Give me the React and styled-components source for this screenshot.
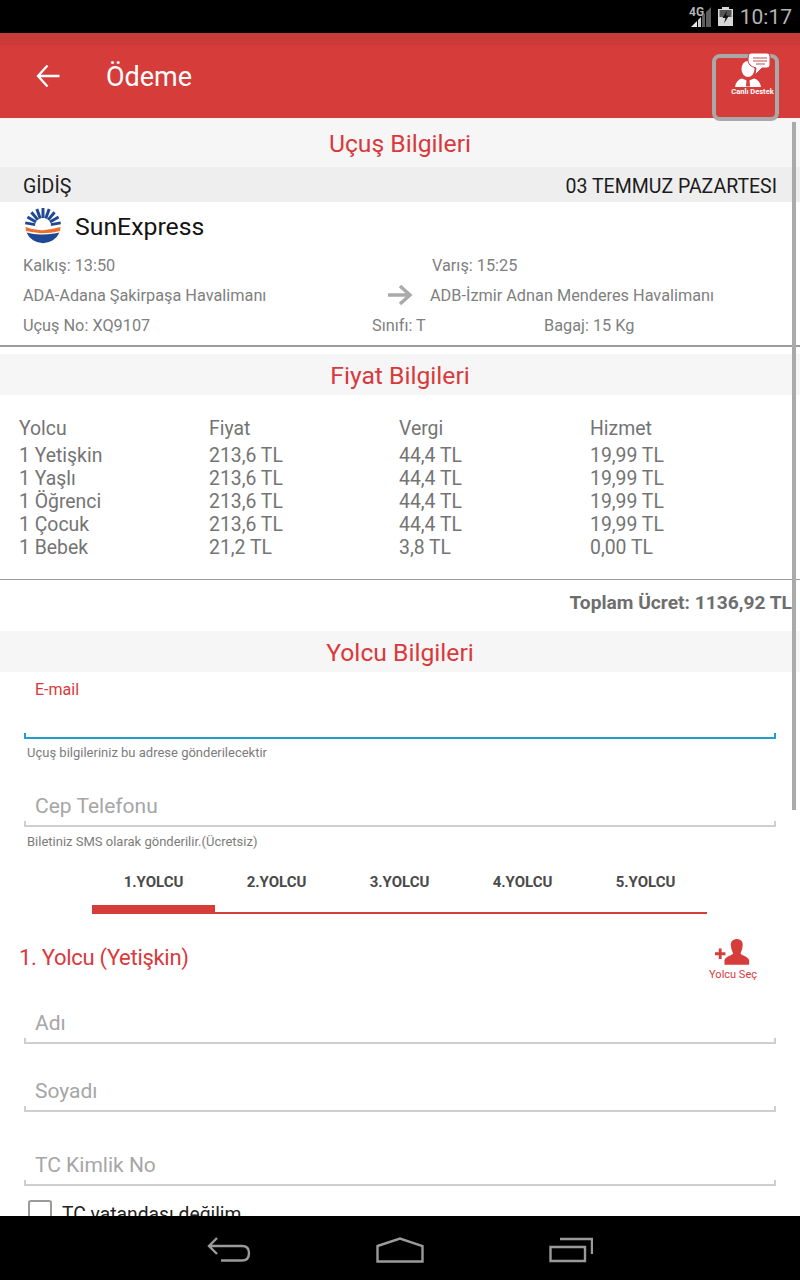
import styled, { createGlobalStyle } from 'styled-components'

const Global = createGlobalStyle`
  html, body { margin: 0; padding: 0; background: #fff; }
  * { box-sizing: border-box; }
  body { font-family: Roboto, "Liberation Sans", sans-serif; }
`

const Screen = styled.div`
  position: relative;
  width: 800px;
  height: 1280px;
  overflow: hidden;
  display: flex;
  flex-direction: column;
  background: #fff;
`
const StatusBar = styled.div`
  height: 33px;
  flex: none;
  background: #000;
  display: flex;
  align-items: center;
  justify-content: flex-end;
  padding-right: 8px;
  color: #b4b4b4;
  font-size: 21px;
  gap: 7px;
`
const StatusIcons = styled.div`
  display: flex;
  align-items: center;
  gap: 6px;
`
const AppBar = styled.div`
  position: relative;
  height: 85px;
  flex: none;
  background: linear-gradient(#c93b39 0, #c93b39 12px, #d63c3a 12px);
  display: flex;
  align-items: center;
  padding: 0 0 0 35px;
  color: #fff;
`
const AppTitle = styled.div`
  font-size: 27px;
  margin-left: 45px;
  margin-top: 2px;
`
const Support = styled.div`
  position: absolute;
  left: 712px;
  top: 21px;
  width: 67px;
  height: 67px;
  border: 4px solid #a9a9a9;
  border-radius: 8px;
  display: flex;
  flex-direction: column;
  align-items: center;
`
const SupportIcon = styled.svg`
  position: absolute;
  left: 8px;
  top: -7px;
`
const SupportLabel = styled.div`
  position: absolute;
  top: 29px;
  left: 7px;
  right: -7px;
  text-align: center;
  font-size: 7.5px;
  font-weight: 700;
  color: #fff;
  white-space: nowrap;
`
const Content = styled.div`
  flex: 1;
  overflow: hidden;
`
const SectionHead = styled.div`
  height: ${p => p.$h}px;
  background: #f6f6f6;
  color: #d9393c;
  font-size: 24.7px;
  display: flex;
  align-items: center;
  justify-content: center;
  padding-top: 1px;
  margin-top: ${p => p.$mt || 0}px;
`
const DirectionRow = styled.div`
  height: 35px;
  background: #eee;
  display: flex;
  justify-content: space-between;
  align-items: center;
  padding: 3px 23px 0;
  font-size: 19.5px;
  color: #1c1c1c;
`
const Airline = styled.div`
  height: 48px;
  display: flex;
  align-items: center;
  padding: 0 0 0 25px;
  gap: 14px;
  font-size: 24.8px;
  color: #141414;
`
const FlightGrid = styled.div`
  height: 97px;
  display: flex;
  flex-direction: column;
  padding-left: 23px;
  font-size: 16.3px;
  color: #808080;
  border-bottom: 2px solid #9c9c9c;
`
const FlightRow = styled.div`
  height: 30px;
  display: flex;
  align-items: center;
  flex: none;
`
const FlightCell = styled.div`
  width: ${p => p.$w}px;
  flex: none;
  white-space: nowrap;
`
const ArrowCell = styled.div`
  width: 43px;
  flex: none;
  display: flex;
  align-items: center;
`
const PriceTable = styled.div`
  height: 185px;
  padding: 22px 0 0 19px;
  border-bottom: 1px solid #9c9c9c;
  font-size: 19.4px;
  color: #747474;
`
const PriceRow = styled.div`
  display: grid;
  grid-template-columns: 190px 190px 191px 190px;
  height: 23px;
  line-height: 23px;
  margin-bottom: ${p => (p.$head ? 4 : 0)}px;
`
const Total = styled.div`
  height: 51px;
  padding: 0 8px 7px 0;
  display: flex;
  align-items: center;
  justify-content: flex-end;
  font-size: 19.2px;
  font-weight: 700;
  color: #6e6e6e;
`
const EmailLabel = styled.div`
  height: 35px;
  padding: 8px 0 0 35px;
  font-size: 16px;
  color: #d9393c;
`
const Field = styled.div`
  height: ${p => p.$h}px;
  margin: 0 24px 0 24px;
  padding-left: 11px;
  display: flex;
  align-items: flex-end;
  font-size: 21px;
  color: #a6a6a6;
  padding-bottom: 7px;
  border-bottom: 2px solid ${p => (p.$active ? '#1f9fd0' : '#cfcfcf')};
  position: relative;
  &::before, &::after {
    content: '';
    position: absolute;
    bottom: -2px;
    width: 2px;
    height: 6px;
    background: ${p => (p.$active ? '#1f9fd0' : '#cfcfcf')};
  }
  &::before { left: 0; }
  &::after { right: 0; }
`
const Helper = styled.div`
  height: ${p => p.$h}px;
  padding: ${p => p.$pt}px 0 0 27px;
  font-size: 13px;
  color: #7c7c7c;
`
const Tabs = styled.div`
  display: flex;
  width: 615px;
  margin: 10px 0 0 92px;
  border-bottom: 2px solid #d63c3a;
`
const Tab = styled.div`
  width: 123px;
  height: 46px;
  padding-top: 5px;
  margin-bottom: -2px;
  text-align: center;
  font-size: 15px;
  font-weight: 700;
  color: #4a4a4a;
  border-bottom: ${p => (p.$active ? '9px solid #d63c3a' : 'none')};
`
const PassengerHead = styled.div`
  height: 63px;
  display: flex;
  align-items: flex-start;
  justify-content: space-between;
  padding: 31px 43px 0 19px;
  color: #d9393c;
  font-size: 22px;
  letter-spacing: -0.3px;
`
const PickPassenger = styled.div`
  display: flex;
  flex-direction: column;
  align-items: center;
  font-size: 11px;
  letter-spacing: 0;
  margin-top: -6px;
  gap: 1px;
`
const CheckRow = styled.div`
  display: flex;
  align-items: flex-start;
  gap: 10px;
  padding: 14px 0 0 28px;
  font-size: 19.3px;
  color: #222;
`
const CheckLabel = styled.span`
  padding-top: 3px;
`
const CheckBox = styled.div`
  width: 24px;
  height: 24px;
  border: 2px solid #9a9a9a;
  border-radius: 3px;
  flex: none;
`
const NavBar = styled.div`
  height: 64px;
  flex: none;
  background: #000;
  position: relative;
  z-index: 1;
  display: flex;
  align-items: center;
  justify-content: center;
  gap: 125px;
  padding: 3px 0 0 0;
`
const ScrollThumb = styled.div`
  position: absolute;
  left: 792px;
  top: 122px;
  width: 4px;
  height: 688px;
  background: #aaa;
`

const SunLogo = () => {
  const rays = []
  for (let i = 0; i < 9; i++) {
    const a = (-90 - 80 + i * 20) * Math.PI / 180
    rays.push(
      <line key={i} x1={18 + 8 * Math.cos(a)} y1={18 + 8 * Math.sin(a)} x2={18 + 18 * Math.cos(a)} y2={18 + 18 * Math.sin(a)}
        stroke="#1f4a93" strokeWidth="3" />
    )
  }
  return (
    <svg width="36" height="36" viewBox="0 0 36 36">
      {rays}
      <path d="M0.5 19 Q10 23 20 22 Q28 21 35.5 19 L35 23 Q22 26 14 25 Q6 24 1 23 Z" fill="#ee6f2d" />
      <path d="M1.5 24.5 Q10 27 18 26.5 Q28 26 34.5 24.5 A18 18 0 0 1 1.5 24.5 Z" fill="#1f4a93" />
    </svg>
  )
}

const prices = [
  ['1 Yetişkin', '213,6 TL', '44,4 TL', '19,99 TL'],
  ['1 Yaşlı', '213,6 TL', '44,4 TL', '19,99 TL'],
  ['1 Öğrenci', '213,6 TL', '44,4 TL', '19,99 TL'],
  ['1 Çocuk', '213,6 TL', '44,4 TL', '19,99 TL'],
  ['1 Bebek', '21,2 TL', '3,8 TL', '0,00 TL'],
]

const App = () => {
  return (
    <Screen>
      <Global />
      <StatusBar>
        <StatusIcons>
          <svg width="23" height="22" viewBox="0 0 23 22">
            <text x="0" y="10" fontSize="12" fontWeight="700" fill="#b4b4b4" fontFamily="Roboto">4G</text>
            <path d="M2 21 L8 15 V21 Z" fill="#e6e6e6" />
            <path d="M9 14 L12 11 V21 H9 Z" fill="#d0d0d0" />
            <path d="M13 10 L16 7 V21 H13 Z M17 6 L22 1 V21 H17 Z" fill="#5e5e5e" />
          </svg>
          <svg width="15" height="19" viewBox="0 0 15 19">
            <path d="M4 0 H11 V2 H15 V19 H0 V2 H4 Z" fill="#d8d8d8" />
            <path d="M1.5 3 H13.5 V10 H1.5 Z" fill="#555" />
            <path d="M9 3.5 L4.5 11 H7.5 L6 16.5 L11 8.5 H8 Z" fill="#111" />
          </svg>
        </StatusIcons>
        10:17
      </StatusBar>

      <AppBar>
        <svg width="26" height="26" viewBox="0 0 26 26" fill="none" stroke="#fff" strokeWidth="2.3">
          <path d="M24.5 13 H4 M12.5 2.5 L3 13 L12.5 23.5" />
        </svg>
        <AppTitle>Ödeme</AppTitle>
        <Support>
          <SupportIcon width="50" height="42" viewBox="0 0 50 42" fill="#fff">
            <ellipse cx="24" cy="18" rx="6.5" ry="8" />
            <path d="M11 36 Q12 29 18 27.5 L24 30 L30 27.5 Q36 29 37 36 Z" />
            <path d="M22.5 29 H25.5 L26 35.5 H22 Z" fill="#d63c3a" />
            <path d="M27 2 H43 Q46 2 46 5 V14 Q46 17 43 17 H38 L31 24 L32 17 Q24 15 24 9 Q24 2 27 2 Z" stroke="#d63c3a" strokeWidth="1" />
            <path d="M29 7 H43 M29 10 H43 M32 13 H41" stroke="#b9504e" strokeWidth="1.2" />
          </SupportIcon>
          <SupportLabel>Canlı Destek</SupportLabel>
        </Support>
      </AppBar>

      <Content>
        <SectionHead $h={49}>Uçuş Bilgileri</SectionHead>
        <DirectionRow>
          <span>GİDİŞ</span>
          <span>03 TEMMUZ PAZARTESI</span>
        </DirectionRow>
        <Airline>
          <SunLogo />
          SunExpress
        </Airline>
        <FlightGrid>
          <FlightRow>
            <FlightCell $w={409}>Kalkış: 13:50</FlightCell>
            <FlightCell $w={300}>Varış: 15:25</FlightCell>
          </FlightRow>
          <FlightRow>
            <FlightCell $w={364}>ADA-Adana Şakirpaşa Havalimanı</FlightCell>
            <ArrowCell>
              <svg width="26" height="22" viewBox="0 0 26 22" fill="none" stroke="#aaa" strokeWidth="3.4">
                <path d="M1 11 H23 M13 2 L23 11 L13 20" />
              </svg>
            </ArrowCell>
            <FlightCell $w={350}>ADB-İzmir Adnan Menderes Havalimanı</FlightCell>
          </FlightRow>
          <FlightRow>
            <FlightCell $w={349}>Uçuş No: XQ9107</FlightCell>
            <FlightCell $w={172}>Sınıfı: T</FlightCell>
            <FlightCell $w={200}>Bagaj: 15 Kg</FlightCell>
          </FlightRow>
        </FlightGrid>

        <SectionHead $h={41} $mt={7}>Fiyat Bilgileri</SectionHead>
        <PriceTable>
          <PriceRow $head>
            <span>Yolcu</span>
            <span>Fiyat</span>
            <span>Vergi</span>
            <span>Hizmet</span>
          </PriceRow>
          {prices.map(row => (
            <PriceRow key={row[0]}>
              {row.map((v, i) => <span key={i}>{v}</span>)}
            </PriceRow>
          ))}
        </PriceTable>
        <Total>Toplam Ücret: 1136,92 TL</Total>

        <SectionHead $h={41}>Yolcu Bilgileri</SectionHead>
        <EmailLabel>E-mail</EmailLabel>
        <Field $h={32} $active />
        <Helper $h={39} $pt={6}>Uçuş bilgileriniz bu adrese gönderilecektir</Helper>
        <Field $h={49}>Cep Telefonu</Field>
        <Helper $h={31} $pt={7}>Biletiniz SMS olarak gönderilir.(Ücretsiz)</Helper>
        <Tabs>
          <Tab $active>1.YOLCU</Tab>
          <Tab>2.YOLCU</Tab>
          <Tab>3.YOLCU</Tab>
          <Tab>4.YOLCU</Tab>
          <Tab>5.YOLCU</Tab>
        </Tabs>
        <PassengerHead>
          <span>1. Yolcu (Yetişkin)</span>
          <PickPassenger>
            <svg width="38" height="28" viewBox="0 0 40 29.5" fill="#d63c3a">
              <path d="M1 14 H5 V10 H8 V14 H12 V17 H8 V21 H5 V17 H1 Z" />
              <path d="M24 0 C29 0 31 4 30 8 C30 11 28.5 13 28 15 C28 17 35 18 37 22 L37 27 H11 L11 22 C13 18 20 17 20 15 C19.5 13 18 11 18 8 C17 4 19 0 24 0 Z" />
            </svg>
            Yolcu Seç
          </PickPassenger>
        </PassengerHead>
        <Field $h={67}>Adı</Field>
        <Field $h={68}>Soyadı</Field>
        <Field $h={74}>TC Kimlik No</Field>
        <CheckRow>
          <CheckBox />
          <CheckLabel>TC vatandaşı değilim</CheckLabel>
        </CheckRow>
      </Content>

      <NavBar>
        <svg width="44" height="26" viewBox="0 0 44 26" fill="none" stroke="#9a9a9a" strokeWidth="2.4">
          <path d="M10 1 L2 9 L10 17 M2 9 H35 Q42 9 42 16 Q42 23.5 35 23.5 H14" />
        </svg>
        <svg width="48" height="26" viewBox="0 0 48 26" fill="none" stroke="#9a9a9a" strokeWidth="2.4">
          <path d="M1.5 9 L24 1.5 L46.5 9 V24.5 H1.5 Z" />
        </svg>
        <svg width="44" height="26" viewBox="0 0 44 26" fill="none" stroke="#9a9a9a" strokeWidth="2.4">
          <path d="M1.5 10 H36 V24 H1.5 Z M11 2 H43 V17" />
        </svg>
      </NavBar>
      <ScrollThumb />
    </Screen>
  )
}

export default App
